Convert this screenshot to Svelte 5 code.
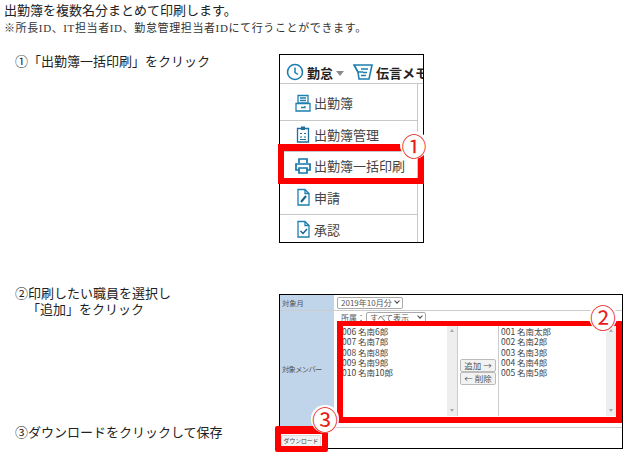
<script>
  const menuItems = [
    { label: '出勤簿', icon: 'book' },
    { label: '出勤簿管理', icon: 'clip' },
    { label: '出勤簿一括印刷', icon: 'print' },
    { label: '申請', icon: 'pen' },
    { label: '承認', icon: 'check' }
  ];
  const leftMembers = ['006 名南6郎', '007 名南7郎', '008 名南8郎', '009 名南9郎', '010 名南10郎'];
  const rightMembers = ['001 名南太郎', '002 名南2郎', '003 名南3郎', '004 名南4郎', '005 名南5郎'];
</script>

<div class="page">
  <h1>出勤簿を複数名分まとめて印刷します。</h1>
  <p class="note">※所長ID、IT担当者ID、勤怠管理担当者IDにて行うことができます。</p>

  <section class="row first">
    <p class="step">①「出勤簿一括印刷」をクリック</p>
    <div class="menu-shot">
      <div class="menu-top">
        <svg class="clock" viewBox="0 0 18 18" width="18" height="18">
          <circle cx="9" cy="9" r="7.5" fill="none" stroke="#1d7fb0" stroke-width="1.6" />
          <path d="M9 4.5V9.5L12 11.5" fill="none" stroke="#1d7fb0" stroke-width="1.5" />
        </svg>
        <b>勤怠</b>
        <span class="caret"></span>
        <svg class="memo" viewBox="0 0 20 18" width="20" height="18">
          <path d="M1 2H19L16 16H6L5 9Z" fill="none" stroke="#1d7fb0" stroke-width="1.6" />
          <path d="M1 2L5 9H10M8 6H15M10 9.5H14M8 12.5H13" fill="none" stroke="#1d7fb0" stroke-width="1.3" />
        </svg>
        <b class="clip-text">伝言メモ</b>
      </div>
      <ul class="menu">
        {#each menuItems as item}
          <li>
            <svg viewBox="0 0 18 18" width="18" height="18">
              {#if item.icon === 'book'}
                <path d="M4 1.5H14V9H4ZM6 4H12M6 6.5H12M2 9.5H16V17H2ZM7 13.5H11V12" fill="none" stroke="#1d7fb0" stroke-width="1.3" />
              {:else if item.icon === 'clip'}
                <path d="M3.5 3.5H14.5V17H3.5Z" fill="none" stroke="#1d6f9c" stroke-width="1.3" />
                <path d="M7 1.5H11V5H7Z" fill="#1d6f9c" />
                <path d="M6 8.5H8M10 8.5H12M6 12H8M10 12H12M6 14.5H12" stroke="#1d6f9c" stroke-width="1.1" />
              {:else if item.icon === 'print'}
                <path d="M5 6V2H13V6M5 13H2V7H16V13H13" fill="none" stroke="#1677a8" stroke-width="1.7" />
                <path d="M5 11H13V16H5Z" fill="none" stroke="#1677a8" stroke-width="1.7" />
              {:else if item.icon === 'pen'}
                <path d="M4 1.5H11L15 5.5V17H4ZM11 1.5V5.5H15" fill="none" stroke="#1d7fb0" stroke-width="1.3" />
                <path d="M7 14L12 8" stroke="#14618c" stroke-width="2" />
              {:else}
                <path d="M4 1.5H11L15 5.5V17H4ZM11 1.5V5.5H15" fill="none" stroke="#1d7fb0" stroke-width="1.3" />
                <path d="M6.5 11L9 13.5L13 9" fill="none" stroke="#14618c" stroke-width="1.5" />
              {/if}
            </svg>
            <span>{item.label}</span>
          </li>
        {/each}
      </ul>
      <div class="mark mark-menu"></div>
      <span class="num num-1">①</span>
    </div>
  </section>

  <section class="row second">
    <div class="steps">
      <p class="step">②印刷したい職員を選択し<br /><span class="indent">「追加」をクリック</span></p>
      <p class="step">③ダウンロードをクリックして保存</p>
    </div>
    <div class="form-shot">
      <div class="form-row month">
        <div class="head">対象月</div>
        <div class="cell"><span class="select">2019年10月分</span></div>
      </div>
      <div class="form-row members">
        <div class="head">対象メンバー</div>
        <div class="cell">
          <div class="dept">所属：<span class="select wide">すべて表示</span></div>
          <div class="pickers">
            <div class="listbox">
              {#each leftMembers as m}<div>{m}</div>{/each}
              <span class="scroll"></span>
            </div>
            <div class="moves">
              <span class="btn">追加 →</span>
              <span class="btn">← 削除</span>
            </div>
            <div class="listbox">
              {#each rightMembers as m}<div>{m}</div>{/each}
              <span class="scroll"></span>
            </div>
          </div>
        </div>
      </div>
      <div class="actions"><span class="btn dl">ダウンロード</span></div>
      <div class="mark mark-list"></div>
      <div class="mark mark-dl"></div>
      <span class="num num-2">②</span>
      <span class="num num-3">③</span>
    </div>
  </section>
</div>

<style>
  :global(body) {
    background: #fff;
  }

  .page {
    width: 629px;
    height: 460px;
    overflow: hidden;
    box-sizing: border-box;
    padding: 1px 0 0 4px;
    font-family: "Noto Sans CJK JP", "Liberation Sans", sans-serif;
    color: #222;
  }

  h1 {
    margin: 0;
    font-size: 13px;
    line-height: 17px;
    font-weight: 400;
  }

  .note {
    margin: 2px 0 0;
    font-family: "Liberation Serif", "Noto Sans CJK JP", serif;
    font-size: 11px;
    line-height: 17px;
    letter-spacing: 0.62px;
    color: #333;
  }

  .row {
    display: flex;
    align-items: flex-start;
  }

  .first {
    margin-top: 1px;
    padding-top: 16px;
  }

  .first .step {
    margin-top: -1px;
  }

  .second {
    margin-top: 42px;
    height: 165px;
  }

  .step {
    width: 264px;
    margin: 0 0 0 11px;
    flex: none;
    font-size: 13px;
    line-height: 15px;
    color: #222;
  }

  .steps {
    width: 275px;
    height: 155px;
    flex: none;
    display: flex;
    flex-direction: column;
    justify-content: space-between;
  }

  .steps .step {
    line-height: 16px;
  }

  .indent {
    padding-left: 12px;
  }

  .menu-shot {
    position: relative;
    width: 143px;
    height: 187px;
    border: 1px solid #000;
    background: #fff;
  }

  .menu-top {
    height: 29px;
    box-sizing: border-box;
    display: flex;
    align-items: center;
    padding: 6px 0 0 6px;
    font-size: 13px;
    overflow: hidden;
    white-space: nowrap;
    border-bottom: 1px solid #c8c8c8;
  }

  .menu-top b {
    font-weight: 700;
    margin-left: 3px;
    flex: none;
  }

  .caret {
    flex: none;
    margin: 2px 8px 0 3px;
    border: 4px solid transparent;
    border-top: 5px solid #8a8a8a;
    border-bottom: 0;
  }

  .memo {
    flex: none;
    margin-left: 1px;
  }

  .clock {
    flex: none;
  }

  .menu {
    list-style: none;
    margin: 0;
    padding: 5px 0 0;
    height: 158px;
    width: 138px;
    box-sizing: border-box;
    overflow: hidden;
    border-right: 1px solid #c8c8c8;
  }

  .menu li {
    height: 31.5px;
    box-sizing: border-box;
    display: flex;
    align-items: center;
    gap: 2px;
    padding: 0 0 3px 14px;
    font-size: 13px;
    color: #444;
    border-bottom: 1px solid #c8c8c8;
  }

  .menu li:last-child {
    border-bottom: 0;
  }

  .mark {
    position: absolute;
    box-sizing: border-box;
    border: 6px solid #f00;
  }

  .mark-menu {
    left: -2px;
    top: 89px;
    width: 146px;
    height: 40px;
    border-top-width: 7px;
  }

  .num {
    position: absolute;
    font-size: 25px;
    line-height: 28px;
    color: #e8211a;
    background: #fff;
    border-radius: 50%;
    width: 28px;
    height: 28px;
    text-align: center;
  }

  .num-1 {
    left: 120px;
    top: 76px;
  }

  .form-shot {
    position: relative;
    width: 342px;
    height: 153px;
    margin-top: 9px;
    border: 1px solid #000;
    background: #fff;
    font-size: 8px;
    color: #555;
  }

  .form-row {
    display: flex;
    border-bottom: 1px solid #ccc;
  }

  .head {
    width: 54px;
    flex: none;
    background: #c0d4ea;
    display: flex;
    align-items: center;
    padding-left: 2px;
    box-sizing: border-box;
    font-size: 7.3px;
    letter-spacing: -0.7px;
  }

  .month {
    height: 15px;
  }

  .month .head {
    letter-spacing: 0;
  }

  .members {
    height: 116px;
  }

  .cell {
    flex: 1;
    padding-left: 5px;
  }

  .select {
    position: relative;
    display: inline-block;
    box-sizing: border-box;
    width: 66px;
    margin: 2px 0 0 -2px;
    height: 12px;
    line-height: 10px;
    padding: 0 3px;
    border: 1px solid #aaa;
    border-radius: 2px;
    font-size: 8px;
    white-space: nowrap;
  }

  .select::after {
    content: "";
    position: absolute;
    right: 3px;
    top: 1px;
    width: 3px;
    height: 3px;
    border-right: 1px solid #444;
    border-bottom: 1px solid #444;
    transform: rotate(45deg);
  }

  .wide {
    width: 60px;
    margin: 1px 0 0 1px;
    vertical-align: top;
  }

  .dept {
    height: 14px;
    padding-left: 2px;
    font-size: 8px;
    line-height: 13px;
    overflow: hidden;
  }

  .pickers {
    display: flex;
    height: 91px;
    margin-left: 3px;
  }

  .listbox {
    position: relative;
    width: 115px;
    padding-top: 1px;
    line-height: 10.3px;
    font-size: 8.5px;
    color: #444;
    border-right: 1px solid #ccc;
  }

  .listbox + .moves + .listbox {
    width: 115px;
    padding-left: 2px;
    border-right: 0;
    border-left: 1px solid #ccc;
  }

  .scroll {
    position: absolute;
    right: 0;
    top: 0;
    bottom: 0;
    width: 10px;
    background: #eee;
  }

  .scroll::before,
  .scroll::after {
    content: "";
    position: absolute;
    left: 3px;
    border: 2px solid transparent;
  }

  .scroll::before {
    top: 4px;
    border-bottom: 3px solid #aaa;
    border-top: 0;
  }

  .scroll::after {
    bottom: 4px;
    border-top: 3px solid #aaa;
    border-bottom: 0;
  }

  .moves {
    width: 40px;
    flex: none;
    display: flex;
    flex-direction: column;
    align-items: center;
    justify-content: center;
    padding-top: 3px;
    box-sizing: border-box;
  }

  .btn {
    display: block;
    box-sizing: border-box;
    width: 36px;
    height: 13px;
    line-height: 11px;
    text-align: center;
    font-size: 8.5px;
    background: #f2f2f2;
    border: 1px solid #bbb;
    border-radius: 2px;
    color: #555;
    white-space: nowrap;
  }

  .actions {
    padding-top: 7px;
  }

  .dl {
    width: 40px;
    height: 12px;
    line-height: 10px;
    font-size: 5.8px;
    margin-left: 1px;
    border-color: #ddd;
    color: #444;
  }

  .mark-list {
    left: 57px;
    top: 26px;
    width: 285px;
    height: 102px;
    border-top-width: 5px;
  }

  .mark-dl {
    left: -5px;
    top: 131px;
    width: 53px;
    height: 26px;
    border-top-width: 8px;
    border-radius: 2px;
  }

  .num-2 {
    left: 309px;
    top: 8px;
    font-size: 26px;
  }

  .num-3 {
    left: 31px;
    top: 110px;
    font-size: 26px;
  }
</style>
